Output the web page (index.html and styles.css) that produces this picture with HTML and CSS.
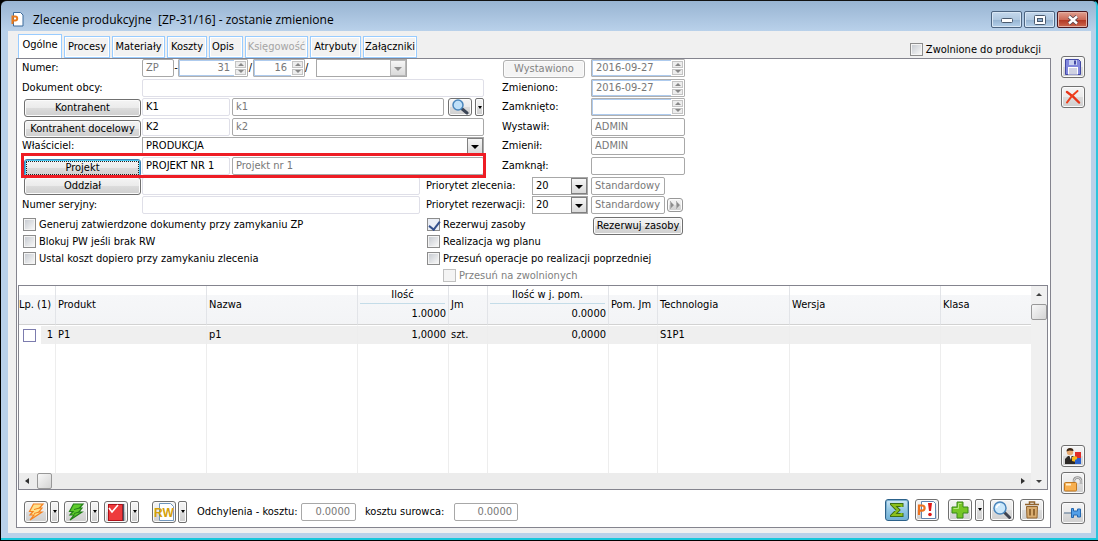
FILE: index.html
```
<!DOCTYPE html>
<html lang="pl">
<head>
<meta charset="utf-8">
<title>Zlecenie produkcyjne</title>
<link rel="stylesheet" href="styles.css">
</head>
<body>
<div class="window">
  <header class="titlebar">
    <svg class="app-icon" width="13" height="15" viewBox="0 0 13 15"><path d="M2.500.5h7l2.500 2.500v11H2.500z" fill="#fff" stroke="#3a6a9c"/><path d="M1.500 12V4.500h2.700a2 2 0 0 1 0 4H1.500" fill="none" stroke="#e87a1c" stroke-width="2"/></svg>
    <h1 class="title">Zlecenie produkcyjne&nbsp; [ZP-31/16] - zostanie zmienione</h1>
    <div class="win-buttons">
      <button class="win-btn" aria-label="Minimalizuj"><svg width="12" height="6" viewBox="0 0 12 6"><rect x=".5" y="1.500" width="11" height="4" rx="1" fill="#fff" stroke="#4a5a6e"/></svg></button>
      <button class="win-btn" aria-label="Maksymalizuj"><svg width="12" height="10" viewBox="0 0 12 10"><rect x=".5" y=".5" width="11" height="9" rx="1" fill="#fff" stroke="#4a5a6e"/><rect x="3.500" y="3.500" width="5" height="3" fill="#8fb0d0" stroke="#4a5a6e"/></svg></button>
      <button class="win-btn win-close" aria-label="Zamknij"><svg width="12" height="10" viewBox="0 0 12 10"><path d="M2 1.500l8 7M10 1.500l-8 7" stroke="#50404a" stroke-width="4"/><path d="M2 1.500l8 7M10 1.500l-8 7" stroke="#fff" stroke-width="2.400"/></svg></button>
    </div>
  </header>

  <div class="client">
    <div class="main">
      <div class="tabrow">
        <nav class="tabs">
          <button class="tab active">Ogólne</button>
          <button class="tab t-procesy">Procesy</button>
          <button class="tab t-materialy">Materiały</button>
          <button class="tab t-koszty">Koszty</button>
          <button class="tab t-opis">Opis</button>
          <button class="tab t-ksieg" disabled>Księgowość</button>
          <button class="tab t-atrybuty">Atrybuty</button>
          <button class="tab t-zal">Załączniki</button>
        </nav>
        <label class="check released"><input type="checkbox">Zwolnione do produkcji</label>
      </div>

      <div class="panel">
        <div class="form">
          <label class="lbl r1" for="nr">Numer:</label>
          <div class="fields r1">
            <input class="inp dim w-zp" id="nr" value="ZP" readonly><span class="sep dash">-</span>
            <span class="spin w-nr"><input class="num" aria-label="Numer" value="31" readonly><span class="arrows"><button aria-label="Więcej"><i class="up"></i></button><button aria-label="Mniej"><i class="down"></i></button></span></span><span class="sep">/</span>
            <span class="spin w-yr"><input class="num" aria-label="Rok" value="16" readonly><span class="arrows"><button aria-label="Więcej"><i class="up"></i></button><button aria-label="Mniej"><i class="down"></i></button></span></span><span class="sep sep2">/</span>
            <span class="combo off w-ser"><select aria-label="Seria" disabled><option></option></select><i></i></span>
          </div>

          <label class="lbl r2" for="dok">Dokument obcy:</label>
          <div class="fields r2"><input class="inp soft grow" id="dok"></div>

          <button class="btn side-btn r3">Kontrahent</button>
          <div class="fields r3">
            <input class="inp soft w-code" aria-label="Kod kontrahenta" value="K1">
            <input class="inp dim grow" aria-label="Nazwa kontrahenta" value="k1" readonly>
            <button class="btn lens" aria-label="Szukaj"><svg width="18" height="16" viewBox="0 0 18 16"><path d="M10 9l6 5" stroke="#3c4656" stroke-width="3" stroke-linecap="round"/><circle cx="7" cy="6" r="5" fill="#bfe0f8" stroke="#4a86bc" stroke-width="1.500"/></svg></button>
            <button class="btn drop" aria-label="Rozwiń"><i></i></button>
          </div>

          <button class="btn side-btn r4">Kontrahent docelowy</button>
          <div class="fields r4">
            <input class="inp soft w-code" aria-label="Kod kontrahenta docelowego" value="K2">
            <input class="inp dim grow" aria-label="Nazwa kontrahenta docelowego" value="k2" readonly>
          </div>

          <label class="lbl r5" for="wl">Właściciel:</label>
          <div class="fields r5"><span class="combo grow"><select id="wl"><option>PRODUKCJA</option></select><i></i></span></div>

          <button class="btn side-btn focus r6">Projekt</button>
          <div class="fields r6">
            <input class="inp soft w-code" aria-label="Kod projektu" value="PROJEKT NR 1">
            <input class="inp dim grow" aria-label="Nazwa projektu" value="Projekt nr 1" readonly>
          </div>
          <div class="highlight"></div>

          <button class="btn side-btn r7">Oddział</button>
          <div class="fields short r7"><input class="inp soft grow" aria-label="Oddział"></div>

          <label class="lbl r8" for="ser">Numer seryjny:</label>
          <div class="fields short r8"><input class="inp soft grow" id="ser"></div>

          <button class="btn issued r1" disabled>Wystawiono</button>
          <div class="vals r1"><span class="spin"><input aria-label="Wystawiono" value="2016-09-27" readonly><span class="arrows"><button aria-label="Więcej"><i class="up"></i></button><button aria-label="Mniej"><i class="down"></i></button></span></span></div>
          <label class="lbl2 r2" for="zm">Zmieniono:</label>
          <div class="vals r2"><span class="spin"><input id="zm" value="2016-09-27" readonly><span class="arrows"><button aria-label="Więcej"><i class="up"></i></button><button aria-label="Mniej"><i class="down"></i></button></span></span></div>
          <label class="lbl2 r3" for="zk">Zamknięto:</label>
          <div class="vals r3"><span class="spin"><input id="zk" readonly><span class="arrows"><button aria-label="Więcej"><i class="up"></i></button><button aria-label="Mniej"><i class="down"></i></button></span></span></div>
          <label class="lbl2 r4" for="wy">Wystawił:</label>
          <div class="vals r4"><input class="inp dim grow" id="wy" value="ADMIN" readonly></div>
          <label class="lbl2 r5" for="zi">Zmienił:</label>
          <div class="vals r5"><input class="inp dim grow" id="zi" value="ADMIN" readonly></div>
          <label class="lbl2 r6" for="za">Zamknął:</label>
          <div class="vals r6"><input class="inp dim grow" id="za" readonly></div>

          <div class="prio r7"><label for="pz">Priorytet zlecenia:</label><span class="combo"><select id="pz"><option>20</option></select><i></i></span></div>
          <div class="vals r7"><input class="inp dim w-std" aria-label="Nazwa priorytetu zlecenia" value="Standardowy" readonly></div>
          <div class="prio r8"><label for="pr">Priorytet rezerwacji:</label><span class="combo"><select id="pr"><option>20</option></select><i></i></span></div>
          <div class="vals r8"><input class="inp dim w-std" aria-label="Nazwa priorytetu rezerwacji" value="Standardowy" readonly><button class="btn ff" aria-label="Dalej"><svg width="12" height="8" viewBox="0 0 12 8"><path d="M1.500 0v8M7.500 0v8" stroke="#b0b0b0"/><path d="M2 1v6l3-3zM8 1v6l3-3z" fill="#8c8c8c"/></svg></button></div>

          <div class="checks left">
            <label class="check"><input type="checkbox">Generuj zatwierdzone dokumenty przy zamykaniu ZP</label>
            <label class="check"><input type="checkbox">Blokuj PW jeśli brak RW</label>
            <label class="check"><input type="checkbox">Ustal koszt dopiero przy zamykaniu zlecenia</label>
          </div>
          <div class="checks right">
            <label class="check"><input type="checkbox" checked>Rezerwuj zasoby</label>
            <label class="check"><input type="checkbox">Realizacja wg planu</label>
            <label class="check"><input type="checkbox">Przesuń operacje po realizacji poprzedniej</label>
            <label class="check sub"><input type="checkbox" disabled>Przesuń na zwolnionych</label>
          </div>
          <button class="btn reserve">Rezerwuj zasoby</button>
        </div>

        <div class="gridbox">
          <div class="table-area">
          <table class="items">
            <colgroup><col class="c1"><col class="c2"><col class="c2"><col class="c4"><col class="c5"><col class="c6"><col class="c7"><col class="c8"><col class="c2"><col></colgroup>
            <thead><tr>
              <th class="lp">Lp. (1)</th><th>Produkt</th><th>Nazwa</th>
              <th class="sum"><div class="cap">Ilość</div><div class="tot">1.0000</div></th>
              <th>Jm</th>
              <th class="sum"><div class="cap">Ilość w j. pom.</div><div class="tot">0.0000</div></th>
              <th>Pom. Jm</th><th>Technologia</th><th>Wersja</th><th>Klasa</th>
            </tr></thead>
            <tbody>
              <tr class="row"><td class="lpcell"><div class="lpwrap"><input type="checkbox" aria-label="Zaznacz 1"><span>1</span></div></td><td>P1</td><td>p1</td><td class="n">1,0000</td><td>szt.</td><td class="n">0,0000</td><td></td><td>S1P1</td><td></td><td></td></tr>
              <tr class="fill"><td></td><td></td><td></td><td></td><td></td><td></td><td></td><td></td><td></td><td></td></tr>
            </tbody>
          </table>
          </div>
          <div class="vscroll"><button aria-label="W górę"><i class="up"></i></button><div class="thumb"></div><button class="end" aria-label="W dół"><i class="down"></i></button></div>
          <div class="hscroll"><button aria-label="W lewo"><i class="lft"></i></button><div class="thumb"></div><button class="end" aria-label="W prawo"><i class="rgt"></i></button></div>
        </div>

        <footer class="toolbar">
          <div class="pair"><button class="btn tool" aria-label="Przelicz"><svg width="18" height="18" viewBox="0 0 18 18"><path d="M6.500 1H16l-3.500 4H15l-3 4h3L3 17l4-5H3l3-3.500H2.500z" fill="#ffe08c" stroke="#f58220" stroke-width="1.200"/><path d="M12.500 5L7 6.500M12 9l-5 1.500" stroke="#f58220"/></svg></button><button class="btn drop" aria-label="Rozwiń"><i></i></button></div>
          <div class="pair"><button class="btn tool" aria-label="Generuj"><svg width="18" height="18" viewBox="0 0 18 18"><path d="M6.500 1H16l-3.500 4H15l-3 4h3L3 17l4-5H3l3-3.500H2.500z" fill="#5ecb2c" stroke="#237f18" stroke-width="1.200"/><path d="M12.500 5L7 6.500M12 9l-5 1.500" stroke="#237f18"/></svg></button><button class="btn drop" aria-label="Rozwiń"><i></i></button></div>
          <div class="pair"><button class="btn tool" aria-label="Zatwierdź"><svg width="18" height="18" viewBox="0 0 18 18"><rect x="1.500" y="1.500" width="14" height="16" fill="#ee3a3c" stroke="#b01018"/><path d="M16.500 1v17" stroke="#4a5566" stroke-width="1.500"/><path d="M2 5l3 4 6-7" fill="none" stroke="#fff" stroke-width="1.600"/></svg></button><button class="btn drop" aria-label="Rozwiń"><i></i></button></div>
          <div class="pair rw"><button class="btn tool" aria-label="Dokument RW"><svg width="20" height="18" viewBox="0 0 20 18"><path d="M5.500.5h11l3 3v14h-14z" fill="#fff" stroke="#7096bc"/><text x="0" y="14" class="rw-text">RW</text></svg></button><button class="btn drop" aria-label="Rozwiń"><i></i></button></div>
          <label class="dev" for="d1">Odchylenia - kosztu:</label><input class="inp dim num d1" id="d1" value="0.0000" readonly>
          <label class="dev2" for="d2">kosztu surowca:</label><input class="inp dim num d2" id="d2" value="0.0000" readonly>
          <div class="right-tools">
            <button class="btn tool on" aria-label="Suma"><svg width="14" height="16" viewBox="0 0 14 16"><path d="M11.500 5V3H3l5 5-5 5h8.500v-2" fill="none" stroke="#3c6e16" stroke-width="4"/><path d="M11.500 5V3H3l5 5-5 5h8.500v-2" fill="none" stroke="#8cc01c" stroke-width="2"/></svg></button>
            <button class="btn tool" aria-label="Braki"><svg width="20" height="18" viewBox="0 0 20 18"><path d="M4.500.5h12l2 2v15h-14z" fill="#fff" stroke="#6084b0"/><path d="M2 14V4.500h3a2.600 2.600 0 0 1 0 5.200H2" fill="none" stroke="#ee7420" stroke-width="2.200"/><path d="M11 2h4l-1 8h-2z" fill="#e01818"/><circle cx="13" cy="13.500" r="1.800" fill="#e01818"/></svg></button>
            <div class="pair add"><button class="btn tool" aria-label="Dodaj"><svg width="18" height="18" viewBox="0 0 18 18"><path d="M6 1h6v5h5v6h-5v5H6v-5H1V6h5z" fill="#76c626" stroke="#388818"/><path d="M7.500 2.500h3M2.500 7.500h5v-5" fill="none" stroke="#b4e880"/></svg></button><button class="btn drop" aria-label="Rozwiń"><i></i></button></div>
            <button class="btn tool" aria-label="Podgląd"><svg width="20" height="18" viewBox="0 0 20 18"><path d="M11.500 10.500l6 6" stroke="#404450" stroke-width="3" stroke-linecap="round"/><circle cx="8" cy="7" r="6" fill="#cbe8fb" stroke="#4a86bc" stroke-width="1.500"/><path d="M4.500 7A4 4 0 0 1 8 3.500" fill="none" stroke="#fff" stroke-width="1.500"/></svg></button>
            <button class="btn tool" aria-label="Usuń"><svg width="16" height="18" viewBox="0 0 16 18"><path d="M5.500 3V1h5v2M1 3.500h14" fill="none" stroke="#92642e" stroke-width="1.500"/><path d="M2.500 5.500h11l-.5 11.500H3z" fill="#d8ac70" stroke="#92642e"/><path d="M6 8v6.500M10 8v6.500" stroke="#7c501e" stroke-width="1.500"/></svg></button>
          </div>
        </footer>
      </div>
    </div>

    <aside class="side">
      <button class="btn tool" aria-label="Zapisz"><svg width="16" height="16" viewBox="0 0 16 16"><path d="M.5.5h13l2 2v13H.5z" fill="#8086dc" stroke="#4248a4"/><rect x="4" y="1" width="8" height="5" fill="#c8d0f0"/><rect x="9" y="1.500" width="2" height="4" fill="#4248a4"/><rect x="3" y="8" width="10" height="7.500" fill="#fff"/><path d="M4 10h8M4 12h8M4 14h8" stroke="#a0a4c4"/></svg></button>
      <button class="btn tool" aria-label="Anuluj"><svg width="16" height="14" viewBox="0 0 16 14"><path d="M2 2q6 4 12 10.500" fill="none" stroke="#e83418" stroke-width="2.400" stroke-linecap="round"/><path d="M12.500 1Q6 6 2 12.500" fill="none" stroke="#f0401c" stroke-width="2" stroke-linecap="round"/></svg></button>
      <div class="spring"></div>
      <button class="btn tool" aria-label="Operator"><svg width="18" height="18" viewBox="0 0 18 18"><path d="M1 17v-5l3-3h5l3 3v5z" fill="#2c2826"/><circle cx="6" cy="5" r="3.200" fill="#e8aa70"/><path d="M2.500 4.500Q2.500 1 6 1t3.500 3l-4-.5z" fill="#3a2412"/><path d="M5.500 9h2l-.5 4z" fill="#fff"/><path d="M8 10l4-1v6l-4-1z" fill="#f8b818"/><rect x="11" y="5" width="6" height="6" fill="#e02c28"/><rect x="11" y="11" width="6" height="6" fill="#2c62cc"/><circle cx="11.500" cy="11" r="1.700" fill="#f8b818"/></svg></button>
      <button class="btn tool lock" aria-label="Odblokuj"><svg width="20" height="18" viewBox="0 0 20 18"><path d="M11 9V6a3.700 3.700 0 0 1 7 0v4" fill="none" stroke="#8e8e8e" stroke-width="2.400"/><path d="M11 9V6a3.700 3.700 0 0 1 7 0v4" fill="none" stroke="#e0e0e0"/><rect x="1.500" y="8.500" width="12" height="8.500" rx="1" fill="#f8b050" stroke="#c07820"/><path d="M3 10.500h5" stroke="#fff0d0" stroke-width="2"/></svg></button>
      <button class="btn tool" aria-label="Przypnij"><svg width="18" height="12" viewBox="0 0 18 12"><path d="M0 6h7" stroke="#8094a8" stroke-width="1.500"/><path d="M7.500 1.500h2v2.500h4V2h3v8h-3V8h-4v2.500h-2z" fill="#54a0e8" stroke="#2468b0"/></svg></button>
    </aside>
  </div>
</div>
</body>
</html>
```
FILE: styles.css
```
* { box-sizing: border-box; }
body { margin: 0; background: #000; font: 11px/14px "DejaVu Sans Condensed", Tahoma, sans-serif; color: #000; }
button, input, select { font: inherit; color: inherit; margin: 0; padding: 0; }
button svg { display: block; flex: none; }
i { display: block; flex: none; width: 0; height: 0; }

.window { min-height: calc(100vh - 1px); display: flex; flex-direction: column; margin-left: 1px; padding: 0 5px 5px 7px; border: 1px solid #111; border-right: 2px solid #2cc4dc; border-bottom: 2px solid #18c8dc; border-left: 0; border-radius: 6px 6px 0 0; background: linear-gradient(#98b4d2, #b9d1ea 30px, #b9d1ea); }
.titlebar { height: 30px; display: flex; align-items: flex-start; padding: 8px 3px 0 3px; }
.app-icon { margin: 3px 9px 0 0; }
.title { margin: 0; padding-top: 2px; flex: 1; font: 12px/18px "Open Sans", "Segoe UI", sans-serif; }
.win-buttons { display: flex; gap: 2px; padding-top: 2px; }
.win-btn { width: 31px; height: 17px; display: flex; align-items: center; justify-content: center; border: 1px solid #4c6480; border-radius: 2px; background: linear-gradient(#c4d8ec, #b0c8e0 50%, #94b2d0 51%, #b4d0ea); box-shadow: inset 0 0 0 1px #d8e6f4; }
.win-close { border-color: #4c1820; background: linear-gradient(#e0a090, #cc6a58 50%, #b03420 51%, #cc6850); box-shadow: inset 0 0 0 1px #e4b0a4; }

.client { flex: 1; display: flex; background: #f0f0f0; padding: 3px 5px 5px 8px; }
.main { flex: 1; min-width: 0; display: flex; flex-direction: column; }
.tabrow { display: flex; align-items: flex-start; height: 24px; }
.tabs { display: flex; align-items: flex-end; gap: 2px; padding-left: 2px; height: 24px; }
.tab { height: 22px; padding: 0; border: 1px solid #99ccff; background: #f2f2f2; display: flex; align-items: center; justify-content: center; box-shadow: inset 0 0 0 1px #fff; white-space: nowrap; }
.tab.active { width: 44px; height: 24px; background: #fff; border-bottom: 0; padding-bottom: 4px; }
.tab:disabled { color: #a4a4a4; }
.t-procesy { width: 46px; } .t-materialy { width: 53px; } .t-koszty { width: 40px; }
.t-opis { width: 34px; padding-right: 6px; } .t-ksieg { width: 63px; } .t-atrybuty { width: 51px; } .t-zal { width: 54px; }
.check { display: flex; align-items: center; gap: 3px; height: 17px; white-space: nowrap; }
.released { margin: 7px 10px 0 auto; }
input[type=checkbox] { appearance: none; flex: none; width: 13px; height: 13px; border: 1px solid #8c8c8c; background: linear-gradient(135deg, #c8ccd2, #f6f6f6) center / 9px 9px no-repeat #f4f4f4; }
input[type=checkbox]:checked { position: relative; background: #eaeef6; }
input[type=checkbox]:checked::after { content: ""; position: absolute; left: 3px; top: 0; width: 5px; height: 9px; border: solid #34508c; border-width: 0 2px 2px 0; transform: rotate(38deg); }
input[type=checkbox]:disabled { border-color: #c0c0c0; background: #f4f4f4; }

.panel { flex: 1; display: flex; flex-direction: column; background: #fff; border: 1px solid #84848e; }
.form { position: relative; display: grid; grid-template-columns: 120px 284px 76px 89px 94px; grid-template-rows: 20px 19px 20px 19px 20px 20px 19px 20px 70px; padding: 0 0 0 5px; }
.r1 { grid-row: 1; } .r2 { grid-row: 2; } .r3 { grid-row: 3; } .r4 { grid-row: 4; }
.r5 { grid-row: 5; } .r6 { grid-row: 6; } .r7 { grid-row: 7; } .r8 { grid-row: 8; }
.lbl { grid-column: 1; line-height: 17px; }
.lbl2 { grid-column: 4; line-height: 18px; }
.fields { grid-column: 2 / 4; display: flex; align-items: flex-start; width: 342px; }
.fields.short { grid-column: 2; width: 278px; }
.vals { grid-column: 5; display: flex; }
.inp { height: 18px; min-width: 0; padding: 0 3px 1px; border: 1px solid #a8a8a8; border-radius: 2px; background: #fff; }
.inp.soft { border-color: #dfdfe8; }
.inp.dim, .spin { color: #787878; }
.grow { flex: 1; width: 0; }
.w-code { width: 88px; margin-right: 2px; }
.w-zp { width: 32px; } .w-ser { width: 91px; }
.w-std { width: 74px; }
.sep { width: 5px; line-height: 18px; text-align: center; }
.sep.dash { width: 4px; } .sep.sep2 { width: 11px; text-align: left; }
.num { text-align: right; }
.spin { display: flex; width: 94px; height: 18px; border: 1px solid #b0b0b0; border-radius: 1px; background: #fff; }
.spin.w-nr { width: 70px; } .spin.w-yr { width: 52px; }
.spin input { flex: 1; width: 0; min-width: 0; border: 1px solid #aecbee; border-right: 0; padding: 0 4px 0 3px; background: #fff; }
.arrows { width: 13px; display: flex; flex-direction: column; gap: 1px; padding: 1px; }
.arrows button { flex: 1; display: flex; align-items: center; justify-content: center; border: 1px solid #c4c4c4; background: #ededed; }
.up, .down { border: 3px solid transparent; border-top-width: 0; border-bottom: 3px solid #888; }
.down { border-top: 3px solid #888; border-bottom-width: 0; }
.combo { display: flex; height: 18px; border: 1px solid #a8a8a8; background: #fff; position: relative; }
.combo select { flex: 1; width: 0; appearance: none; border: 0; background: none; padding: 0 3px; }
.combo i { pointer-events: none; width: 16px; height: 16px; border: 1px solid #808080; background: linear-gradient(#f6f6f6, #dadada); position: relative; }
.combo i::after { content: ""; position: absolute; left: 3px; top: 6px; border: 4px solid transparent; border-top-color: #000; border-bottom: 0; }
.combo.off i { border-color: #b8b8b8; } .combo.off i::after { border-top-color: #909090; }
.btn { display: flex; align-items: center; justify-content: center; border: 1px solid #707070; border-radius: 3px; background: linear-gradient(#f4f4f4, #ebebeb 48%, #dcdcdc 50%, #cfcfcf); box-shadow: inset 0 0 0 1px #fbfbfb; white-space: nowrap; }
.side-btn { grid-column: 1; width: 117px; height: 18px; margin: 1px 0 0 2px; }
.side-btn.r4, .side-btn.r6 { margin-top: 2px; }
.side-btn.r7 { margin-top: 0; }
.side-btn.focus { border-color: #3c7fb1; box-shadow: inset 0 0 0 1px #48c8f0; outline: 1px dotted #222; outline-offset: -3px; }
.issued { grid-column: 4; width: 82px; height: 18px; margin: 1px 0 0 1px; color: #838383; border-color: #b0b0b0; background: #f4f4f4; }
.lens { width: 24px; height: 18px; margin: 0 3px 0 4px; }
.drop { width: 9px; height: 22px; border-radius: 2px; }
.fields .drop { height: 18px; }
.drop i { border: 2px solid transparent; border-top: 3px solid #000; border-bottom: 0; }
.prio { grid-column: 3 / 5; display: flex; }
.prio label { width: 106px; line-height: 17px; }
.prio .combo { width: 56px; }
.ff { width: 16px; height: 14px; margin: 2px 0 0 2px; border-color: #989898; }
.highlight { position: absolute; left: 4px; top: 94px; width: 465px; height: 25px; border: 3px solid #ee1c24; pointer-events: none; }
.checks { grid-row: 9; }
.checks.left { grid-column: 1 / 3; padding-left: 1px; }
.checks.right { grid-column: 3 / 5; padding-left: 1px; }
.check.sub { padding-left: 16px; color: #808080; }
.reserve { grid-row: 9; grid-column: 5; width: 90px; height: 18px; margin: 1px 0 0 2px; }

.gridbox { flex: 1; display: grid; grid-template-columns: 1fr 16px; grid-template-rows: 1fr 16px; margin: -1px 2px 0 1px; border: 1px solid #84848e; }
.table-area { display: flex; min-width: 0; }
.items { width: 100%; border-collapse: separate; border-spacing: 0; table-layout: fixed; }
.c1 { width: 37px; } .c2 { width: 151px; } .c4 { width: 91px; } .c5 { width: 39px; } .c6 { width: 121px; } .c7 { width: 49px; } .c8 { width: 132px; }
.items th { height: 38px; padding: 0 2px; font-weight: normal; text-align: left; white-space: nowrap; border-right: 1px solid #e2e4e8; border-bottom: 1px solid #d2d2d2; background: linear-gradient(#fff 9px, #f6f7f9 9px, #f3f4f6); }
.items th.lp { padding: 0; }
.items th.sum { vertical-align: top; }
.cap { height: 18px; line-height: 18px; text-align: center; border-bottom: 1px solid #c4dce8; margin-right: 1px; }
.tot { line-height: 20px; text-align: right; }
.items td { padding: 0 2px; border-right: 1px solid #ededed; }
.items th:last-child, .items td:last-child { border-right: 0; }
.row td { height: 19px; background: #efefef; border-top: 1px solid #fff; white-space: nowrap; }
.items td.n { text-align: right; }
.row .lpcell { background: linear-gradient(90deg, #fff 22px, #efefef 22px); padding: 0; }
.lpwrap { display: flex; align-items: center; justify-content: space-between; padding: 0 2px 0 4px; }
.lpwrap input { background: #fff; border-color: #7c7cae; }
.vscroll { display: flex; flex-direction: column; background: #f0f0f0; grid-row: 1 / 3; grid-column: 2; }
.hscroll { display: flex; background: #ececec; }
.vscroll button, .hscroll button { display: flex; align-items: center; justify-content: center; width: 16px; height: 16px; border: 0; background: none; }
.vscroll .up { border-bottom-color: #404040; } .vscroll .down { border-top-color: #404040; }
.lft, .rgt { border: 3px solid transparent; border-left-width: 0; border-right: 4px solid #303030; }
.rgt { border-left: 4px solid #303030; border-right-width: 0; }
.thumb { border: 1px solid #989898; border-radius: 2px; background: linear-gradient(135deg, #f8f8f8, #d4d4d4); }
.vscroll .thumb { height: 16px; margin-top: 2px; }
.hscroll .thumb { width: 15px; margin-left: 2px; }
.vscroll .end { margin-top: auto; } .hscroll .end { margin-left: auto; }

.toolbar { display: flex; align-items: center; height: 37px; padding: 6px 6px 0 7px; }
.tool { width: 24px; height: 22px; flex: none; }
.pair { display: flex; gap: 2px; margin-right: 5px; }
.rw { margin-left: 8px; }
.rw-text { font: bold 12px "Liberation Sans", Arial, sans-serif; fill: #d4a008; }
.dev { margin-left: 5px; width: 104px; white-space: nowrap; }
.d1 { width: 55px; } .d2 { width: 64px; }
.toolbar .num { padding-right: 5px; }
.dev2 { margin-left: 9px; width: 89px; white-space: nowrap; }
.right-tools { display: flex; gap: 6px; margin: -4px 0 0 auto; }
.right-tools .pair { gap: 3px; margin: 0 0 0 3px; }
.on { border-color: #2c628b; background: linear-gradient(#cfe8f6, #94c8e4 50%, #6cb0d8); box-shadow: inset 0 0 0 1px #7cb0d0; }
.side { display: flex; flex-direction: column; gap: 8px; width: 35px; padding: 22px 0 4px 10px; }
.side .spring { flex: 1; }
.side .lock { margin-top: -3px; }
```
